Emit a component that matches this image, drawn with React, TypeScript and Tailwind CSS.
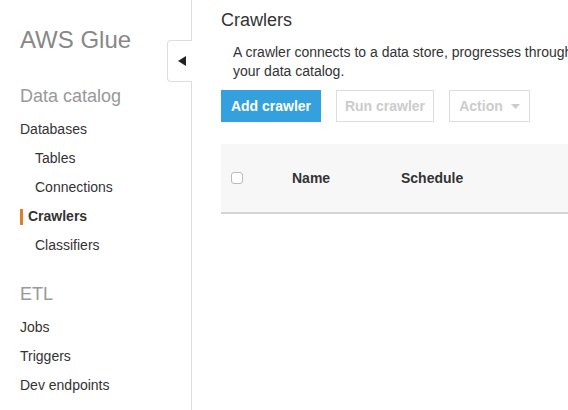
import React from "react";

function NavItem({ label, indent, active }: { label: string; indent?: boolean; active?: boolean }) {
  if (active) {
    return (
      <div className="h-[29px] flex items-center pl-[20px]">
        <div className="w-[3px] h-[16px] bg-[#e07e28] mr-[5px]" />
        <span className="text-[14px] font-bold text-[#333]">{label}</span>
      </div>
    );
  }
  return (
    <div className={`h-[29px] flex items-center text-[14px] text-[#333] ${indent ? "pl-[35px]" : "pl-[20px]"}`}>
      {label}
    </div>
  );
}

export default function App() {
  return (
    <div
      className="relative w-[568px] h-[410px] overflow-hidden bg-white flex"
      style={{ fontFamily: '"Liberation Sans", Arial, sans-serif' }}
    >
      <aside className="w-[192px] h-full border-r border-[#dddddd] shrink-0 pt-[26px]">
        <div className="pl-[20px] h-[28px] leading-[28px] text-[24px] text-[#888888]">AWS Glue</div>
        <div className="pl-[20px] mt-[30px] h-[24px] leading-[24px] text-[18px] text-[#999999]">Data catalog</div>
        <div className="mt-[7px] flex flex-col">
          <NavItem label="Databases" />
          <NavItem label="Tables" indent />
          <NavItem label="Connections" indent />
          <NavItem label="Crawlers" active />
          <NavItem label="Classifiers" indent />
        </div>
        <div className="pl-[20px] mt-[22px] h-[24px] leading-[24px] text-[18px] text-[#999999]">ETL</div>
        <div className="mt-[7px] flex flex-col">
          <NavItem label="Jobs" />
          <NavItem label="Triggers" />
          <NavItem label="Dev endpoints" />
        </div>
      </aside>

      <div className="absolute left-[167px] top-[40px] w-[25px] h-[42px] bg-white border border-r-0 border-[#dddddd] rounded-l-[4px] flex items-center justify-center">
        <svg width="8" height="10" viewBox="0 0 8 10" className="ml-[3px]">
          <path d="M8 0 L0 5 L8 10 Z" fill="#222" />
        </svg>
      </div>

      <main className="flex-1 min-w-0 overflow-hidden pl-[29px] pt-[9px]">
        <h1 className="text-[18px] leading-[22px] text-[#333] font-normal">Crawlers</h1>
        <div className="mt-[12px] pl-[12px] text-[14px] leading-[19px] text-[#333] whitespace-nowrap">
          <div>A crawler connects to a data store, progresses through a prioritized list of classifiers to determine the schema for your data, and then creates metadata tables in</div>
          <div>your data catalog.</div>
        </div>
        <div className="mt-[9px] flex gap-[15px]">
          <button className="w-[100px] h-[32px] bg-[#34a0dd] text-white text-[14px] font-bold">Add crawler</button>
          <button className="w-[98px] h-[32px] border border-[#dddddd] text-[#cccccc] text-[14px] font-bold bg-white">Run crawler</button>
          <button className="w-[81px] h-[32px] border border-[#dddddd] text-[#cccccc] text-[14px] font-bold bg-white flex items-center justify-center gap-[8px]">
            <span>Action</span>
            <svg width="9" height="5" viewBox="0 0 9 5"><path d="M0 0 L9 0 L4.5 5 Z" fill="#cccccc" /></svg>
          </button>
        </div>
        <div className="mt-[22px] h-[70px] bg-[#f7f7f7] border-b-2 border-[#d5d5d5] flex items-center w-[800px]">
          <div className="ml-[10px] w-[12px] h-[12px] rounded-[3px] border border-[#bbbbbb] bg-white" />
          <div className="ml-[49px] w-[109px] text-[14px] font-bold text-[#333]">Name</div>
          <div className="text-[14px] font-bold text-[#333]">Schedule</div>
        </div>
      </main>
    </div>
  );
}
